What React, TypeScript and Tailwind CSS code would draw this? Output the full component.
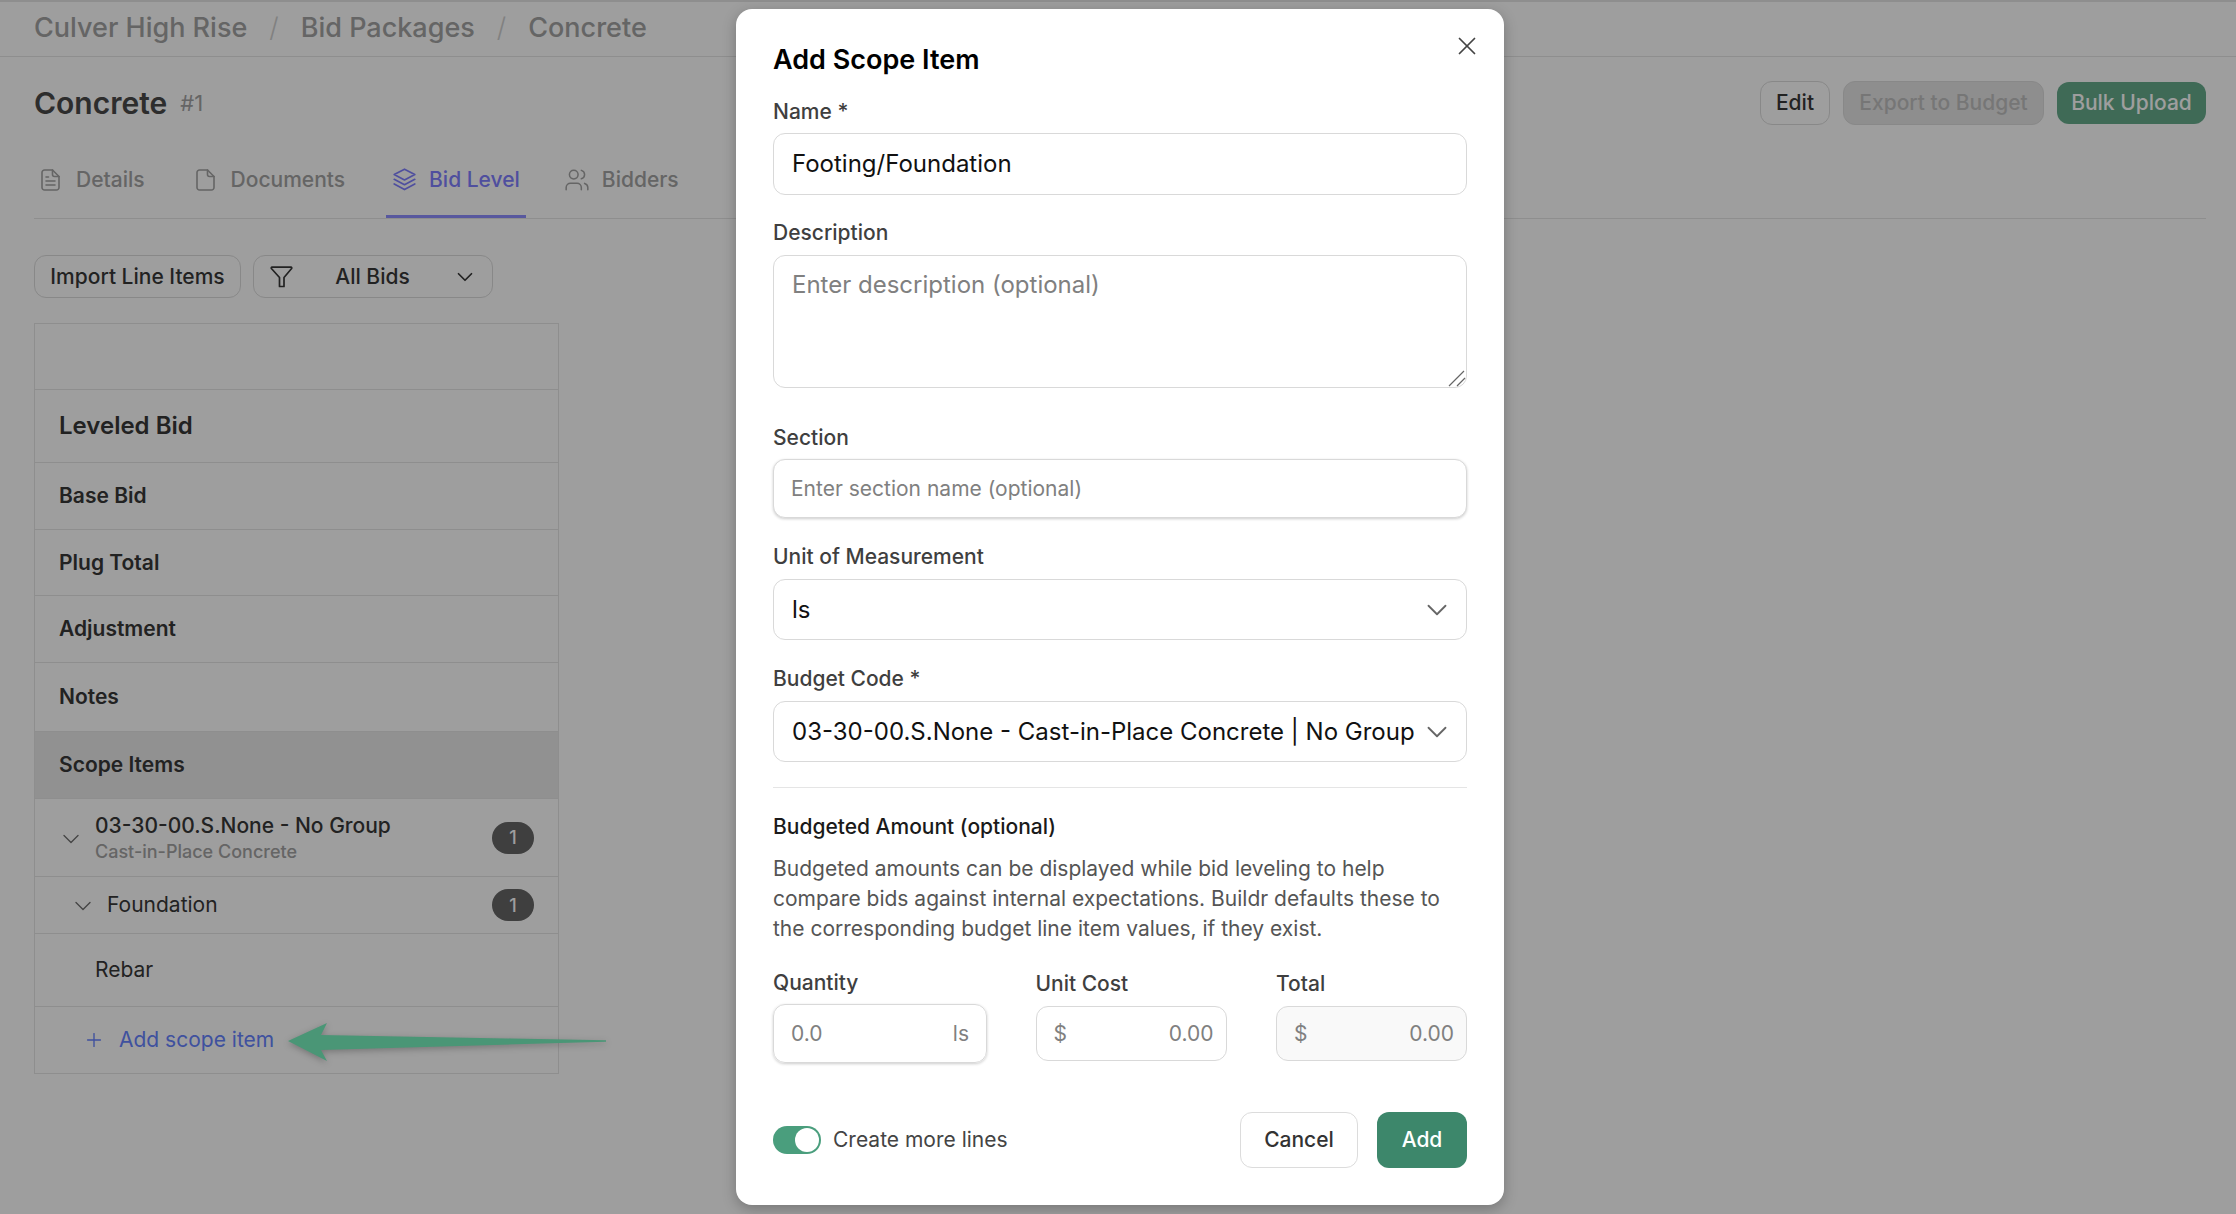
import { ChevronDown, Plus, Users, X } from 'lucide-react'

const rowClass = 'flex items-center border-b border-[#e5e5e5] pl-[24px] text-[21px] font-semibold text-[#383838]'
const labelClass = 'block h-[26px] text-[21px] leading-[26px] font-medium text-[#3f3f3f]'
const inputClass =
  'block w-full rounded-[12px] border border-[#d9d9d9] bg-white text-[#111] outline-none placeholder:text-[#808080]'

const DetailsIcon = () => (
  <svg width="19" height="22" viewBox="0 0 19 22" fill="none" stroke="currentColor" strokeWidth="1.6" strokeLinejoin="round" strokeLinecap="round" className="mr-[3px]">
    <path d="M3.500 1h8L18 7.500V18.500a2.500 2.500 0 0 1-2.500 2.500h-12A2.500 2.500 0 0 1 1 18.500v-15A2.500 2.500 0 0 1 3.500 1z" />
    <path d="M11.500 1v4.500a2 2 0 0 0 2 2H18" />
    <path d="M5 8h2.500M5 12h9M5 16h9" />
  </svg>
)

const FileIcon = () => (
  <svg width="19" height="22" viewBox="0 0 19 22" fill="none" stroke="currentColor" strokeWidth="1.6" strokeLinejoin="round" strokeLinecap="round" className="mr-[3px] ml-[1px]">
    <path d="M3.500 1h8L18 7.500V18.500a2.500 2.500 0 0 1-2.500 2.500h-12A2.500 2.500 0 0 1 1 18.500v-15A2.500 2.500 0 0 1 3.500 1z" />
    <path d="M11.500 1v4.500a2 2 0 0 0 2 2H18" />
  </svg>
)

const LayersIcon = () => (
  <svg width="23" height="23" viewBox="0 0 23 23" fill="none" stroke="currentColor" strokeWidth="1.7" strokeLinejoin="round" strokeLinecap="round">
    <path d="M11.500 1.200 21.800 6.600 11.500 12 1.200 6.600z" />
    <path d="M1.200 11.300 11.500 16.700 21.800 11.300" />
    <path d="M1.200 16 11.500 21.600 21.800 16" />
  </svg>
)

const FunnelIcon = () => (
  <svg width="23" height="22" viewBox="0 0 23 22" fill="none" stroke="currentColor" strokeWidth="1.700" strokeLinejoin="round" strokeLinecap="round">
    <path d="M2 1.200h19a.8.8 0 0 1 .6 1.300L14 11.500v9h-4.500v-9L1.400 2.500A.8.8 0 0 1 2 1.200z" />
  </svg>
)

const Arrow = () => (
  <svg width="330" height="50" viewBox="0 0 330 50" className="absolute top-[1016px] left-[282px] drop-shadow-[0_2px_3px_rgba(0,0,0,0.25)]">
    <path d="M6 25 45 7 39 19 324 24.300V25.700L39 34 45 45z" fill="#4a9676" />
  </svg>
)

const Tab = ({ icon, label, active, className = '' }: { icon: React.ReactNode; label: string; active?: boolean; className?: string }) => (
  <div
    className={`flex h-[71px] items-center gap-[13px] border-b-[3px] pb-[3px] pl-[7px] text-[21px] font-medium ${className} ${
      active ? 'border-[#8e8eff] pr-[6px] text-[#8080ff]' : 'border-transparent pr-[7px] text-[#a3a3a3]'
    }`}
  >
    {icon}
    <span>{label}</span>
  </div>
)

const Badge = () => (
  <span className="flex h-[32px] w-[42px] items-center justify-center rounded-full bg-[#666] text-[18px] font-medium text-white">
    1
  </span>
)

const App = () => {
  return (
    <div className="relative h-[1214px] w-[2236px] overflow-hidden bg-white font-['Inter',sans-serif]">
      <header className="flex h-[57px] items-center border-t-[2px] border-b border-[#e5e5e5] pb-[1px] pl-[34px] text-[27px] font-medium text-[#a3a3a3]">
        <span>Culver High Rise</span>
        <span className="mx-[22px] font-light text-[#d0d0d0]">/</span>
        <span>Bid Packages</span>
        <span className="mx-[22px] font-light text-[#d0d0d0]">/</span>
        <span>Concrete</span>
      </header>

      <main className="pr-[30px] pl-[34px]">
        <div className="mt-[24px] flex h-[44px] items-center justify-between">
          <div className="flex items-center gap-[13px]">
            <h1 className="text-[30px] font-semibold text-[#4a4a4a]">Concrete</h1>
            <span className="text-[22px] text-[#a3a3a3]">#1</span>
          </div>
          <div className="flex items-center gap-[13px] text-[21px] font-medium">
            <button className="h-[44px] w-[70px] rounded-[12px] border border-[#dcdcdc] text-[#383838]">Edit</button>
            <button className="h-[44px] w-[201px] rounded-[12px] border border-[#dcdcdc] bg-[#e5e5e5] text-[#bfbfbf]">
              Export to Budget
            </button>
            <button className="h-[42px] w-[149px] rounded-[12px] bg-[#66ab8c] text-white">Bulk Upload</button>
          </div>
        </div>

        <nav className="mt-[22px] flex gap-[36px] border-b border-[#e5e5e5]">
          <Tab icon={<DetailsIcon />} label="Details" />
          <Tab icon={<FileIcon />} label="Documents" />
          <Tab icon={<LayersIcon />} label="Bid Level" active className="-ml-[2px]" />
          <Tab icon={<Users size={26} strokeWidth={1.4} className="-mx-[1px]" />} label="Bidders" className="-ml-[4px]" />
        </nav>

        <div className="mt-[36px] flex h-[43px] gap-[12px] text-[21px] font-medium text-[#383838]">
          <button className="w-[207px] rounded-[12px] border border-[#dcdcdc]">Import Line Items</button>
          <div className="flex w-[240px] items-center rounded-[12px] border border-[#dcdcdc] pr-[14px] pl-[16px]">
            <FunnelIcon />
            <span className="flex-1 text-center">All Bids</span>
            <ChevronDown size={26} strokeWidth={1.6} />
          </div>
        </div>

        <section className="mt-[25px] w-[525px] border-x border-t border-[#e5e5e5]">
          <div className="h-[66px] border-b border-[#e5e5e5]" />
          <div className={`${rowClass} h-[73px] text-[24px]`}>Leveled Bid</div>
          <div className={`${rowClass} h-[67px]`}>Base Bid</div>
          <div className={`${rowClass} h-[66px]`}>Plug Total</div>
          <div className={`${rowClass} h-[67px]`}>Adjustment</div>
          <div className={`${rowClass} h-[69px]`}>Notes</div>
          <div className={`${rowClass} h-[67px] bg-[#eaeaea] text-[#303030]`}>Scope Items</div>

          <div className="flex h-[78px] items-center border-b border-[#e5e5e5] pr-[24px] pl-[22px]">
            <ChevronDown size={28} strokeWidth={1.2} className="mt-[2px] text-[#707070]" />
            <div className="ml-[10px] flex-1">
              <div className="text-[21px] leading-[28px] font-medium text-[#383838]">03-30-00.S.None - No Group</div>
              <div className="text-[18px] leading-[24px] font-medium text-[#a3a3a3]">Cast-in-Place Concrete</div>
            </div>
            <Badge />
          </div>
          <div className="flex h-[57px] items-center border-b border-[#e5e5e5] pr-[24px] pl-[34px]">
            <ChevronDown size={28} strokeWidth={1.2} className="mt-[2px] text-[#707070]" />
            <span className="ml-[10px] flex-1 text-[21px] text-[#383838]">Foundation</span>
            <Badge />
          </div>
          <div className="flex h-[73px] items-center border-b border-[#e5e5e5] pl-[60px] text-[21px] text-[#383838]">Rebar</div>
          <div className="flex h-[67px] items-center border-b border-[#e5e5e5] pl-[48px] text-[21px] text-[#6683ff]">
            <Plus size={22} strokeWidth={1.5} />
            <span className="ml-[14px]">Add scope item</span>
          </div>
        </section>
      </main>

      <div className="absolute inset-0 bg-[rgba(0,0,0,0.38)] pt-[9px] pl-[736px]">
        <div className="relative h-[1196px] w-[768px] rounded-[16px] bg-white px-[37px] pt-[33px] shadow-[0_4px_14px_rgba(0,0,0,0.25)]">
          <button className="absolute top-[22px] right-[22px] text-[#444]">
            <X size={30} strokeWidth={1.4} />
          </button>
          <h2 className="h-[36px] text-[27px] leading-[36px] font-semibold text-black">Add Scope Item</h2>

          <label className={`${labelClass} mt-[21px]`}>Name *</label>
          <input className={`${inputClass} mt-[8px] h-[62px] px-[18px] pb-[1px] text-[24px]`} defaultValue="Footing/Foundation" />

          <label className={`${labelClass} mt-[25px]`}>Description</label>
          <div className="relative mt-[9px]">
            <textarea
              className={`${inputClass} h-[133px] resize-none px-[18px] py-[12px] text-[24px] leading-[34px]`}
              placeholder="Enter description (optional)"
            />
            <svg width="18" height="18" viewBox="0 0 18 18" fill="none" stroke="#666" strokeWidth="1.2" className="absolute right-[1px] bottom-[1px]">
              <path d="M1 17 16 2M9 17 17 9" />
            </svg>
          </div>

          <label className={`${labelClass} mt-[37px]`}>Section</label>
          <input
            className={`${inputClass} mt-[8px] h-[59px] px-[17px] text-[21px] shadow-[0_1px_3px_rgba(0,0,0,0.2)]`}
            placeholder="Enter section name (optional)"
          />

          <label className={`${labelClass} mt-[26px]`}>Unit of Measurement</label>
          <div className="mt-[9px] flex h-[61px] items-center justify-between rounded-[12px] border border-[#d9d9d9] pr-[12px] pl-[18px] text-[24px] text-[#111]">
            <span>ls</span>
            <ChevronDown size={34} strokeWidth={1.3} className="text-[#666]" />
          </div>

          <label className={`${labelClass} mt-[26px]`}>Budget Code *</label>
          <div className="mt-[9px] flex h-[61px] items-center justify-between rounded-[12px] border border-[#d9d9d9] pr-[12px] pl-[18px] text-[24px] text-[#111]">
            <span>03-30-00.S.None - Cast-in-Place Concrete | No Group</span>
            <ChevronDown size={34} strokeWidth={1.3} className="text-[#666]" />
          </div>

          <hr className="mt-[25px] border-[#e5e5e5]" />

          <div className="mt-[26px] h-[26px] text-[21px] leading-[26px] font-medium text-[#1a1a1a]">Budgeted Amount (optional)</div>
          <p className="mt-[14px] text-[21px] leading-[30px] text-[#555]">
            Budgeted amounts can be displayed while bid leveling to help compare bids against internal expectations. Buildr defaults these to the corresponding budget line item values, if they exist.
          </p>

          <div className="mt-[26px] flex h-[93px] justify-between">
            <div className="w-[214px]">
              <label className={labelClass}>Quantity</label>
              <div className="mt-[8px] flex h-[59px] items-center justify-between rounded-[12px] border border-[#d9d9d9] pr-[17px] pl-[17px] text-[21px] text-[#808080] shadow-[0_1px_3px_rgba(0,0,0,0.2)]">
                <span>0.0</span>
                <span>ls</span>
              </div>
            </div>
            <div className="ml-[48px] w-[191px]">
              <label className={`${labelClass} mt-[1px]`}>Unit Cost</label>
              <div className="mt-[9px] flex h-[55px] items-center justify-between rounded-[12px] border border-[#d9d9d9] pr-[12px] pl-[17px] text-[21px] text-[#808080]">
                <span>$</span>
                <span>0.00</span>
              </div>
            </div>
            <div className="ml-[49px] w-[191px]">
              <label className={`${labelClass} mt-[1px]`}>Total</label>
              <div className="mt-[9px] flex h-[55px] items-center justify-between rounded-[12px] border border-[#d9d9d9] bg-[#f9f9f9] pr-[12px] pl-[17px] text-[21px] text-[#808080]">
                <span>$</span>
                <span>0.00</span>
              </div>
            </div>
          </div>

          <div className="mt-[49px] flex h-[56px] items-center">
            <span className="flex h-[28px] w-[48px] items-center justify-end rounded-full bg-[#4a9e7d] pr-[2px]">
              <span className="h-[24px] w-[24px] rounded-full bg-white" />
            </span>
            <span className="ml-[12px] flex-1 text-[21px] text-[#444]">Create more lines</span>
            <button className="h-[56px] w-[118px] rounded-[12px] border border-[#dcdcdc] text-[21px] font-medium text-[#333]">Cancel</button>
            <button className="ml-[19px] h-[56px] w-[90px] rounded-[12px] bg-[#3d876b] text-[21px] font-medium text-white">Add</button>
          </div>
        </div>
      </div>

      <Arrow />
    </div>
  )
}

export default App
